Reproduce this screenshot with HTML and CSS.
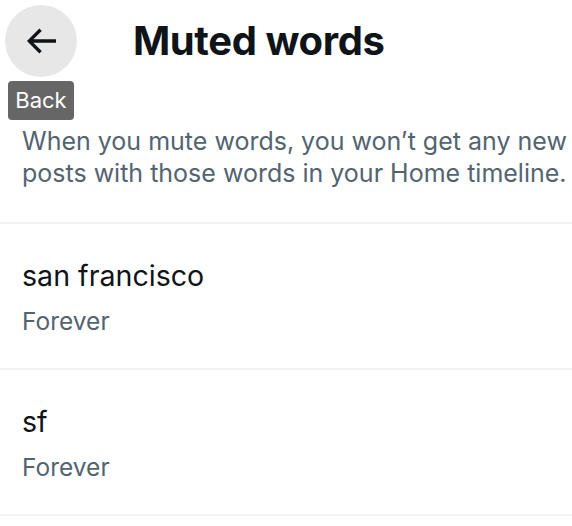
FILE: index.html
```html
<!DOCTYPE html>
<html lang="en">
<head>
<meta charset="utf-8">
<title>Muted words</title>
<link rel="stylesheet" href="styles.css">
</head>
<body>
<div class="page">
  <header class="header">
    <div class="back-wrap">
      <button class="back-btn" aria-label="Back">
        <svg viewBox="0 0 24 24" class="back-icon" aria-hidden="true"><path d="M7.414 13l5.043 5.04-1.414 1.42L3.586 12l7.457-7.46 1.414 1.42L7.414 11H21v2H7.414z"/></svg>
      </button>
      <span class="tooltip">Back</span>
    </div>
    <h1 class="title">Muted words</h1>
  </header>
  <p class="desc">When you mute words, you won’t get any new posts with those words in your Home timeline.</p>
  <ul class="list">
    <li class="item">
      <div class="word">san francisco</div>
      <div class="dur">Forever</div>
    </li>
    <li class="item">
      <div class="word">sf</div>
      <div class="dur">Forever</div>
    </li>
  </ul>
</div>
</body>
</html>
```
FILE: styles.css
```css
* { box-sizing: border-box; }
html, body { margin: 0; padding: 0; background: #fff; }
body {
  font-family: Inter, "Noto Sans", "Liberation Sans", sans-serif;
  color: #0f1419;
  overflow: hidden;
}
.page { width: 572px; }
.header {
  display: flex;
  align-items: center;
  height: 82px;
  padding: 5px;
  gap: 56px;
}
.back-wrap { position: relative; width: 72px; height: 72px; }
.back-btn {
  width: 72px; height: 72px;
  border: 0; padding: 0; margin: 0;
  border-radius: 50%;
  background: #e7e7e8;
  display: flex; align-items: center; justify-content: center;
}
.back-icon { width: 40px; height: 40px; fill: #0f1419; }
.tooltip {
  position: absolute;
  left: 3px; top: 76px;
  width: 66px; height: 39px;
  background: #666;
  color: #fff;
  border-radius: 4px;
  font-size: 22px;
  line-height: 39px;
  text-align: center;
}
.title {
  margin: 0;
  font-size: 40px;
  font-weight: 700;
  line-height: 48px;
  letter-spacing: -0.4px;
}
.desc {
  margin: 0;
  padding: 43px 0 33px 22px;
  font-size: 25px;
  line-height: 32px;
  color: #536471;
  border-bottom: 2px solid #eff3f4;
}
.list { list-style: none; margin: 0; padding: 0; }
.item {
  padding: 31px 22px 29px;
  border-bottom: 2px solid #eff3f4;
  display: flex;
  flex-direction: column;
  gap: 6px;
}
.word { font-size: 28.6px; line-height: 42px; color: #0f1419; }
.dur { font-size: 24.5px; line-height: 36px; color: #536471; }
```
